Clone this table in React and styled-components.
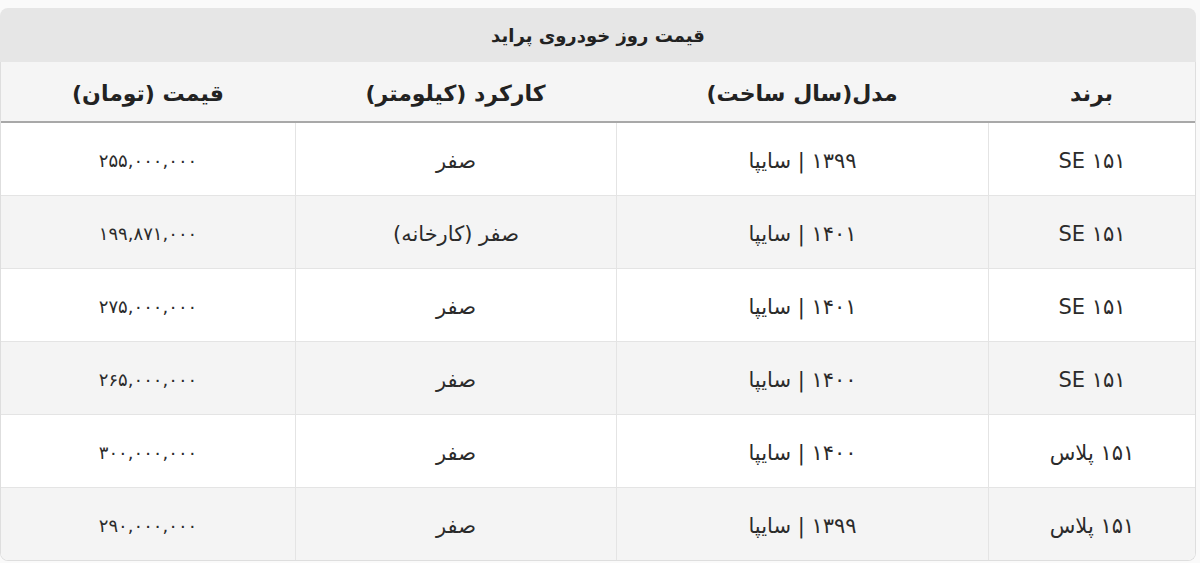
import React from 'react';
import styled, {createGlobalStyle} from 'styled-components';

const GlobalStyle = createGlobalStyle`
  body {
    margin:0;
    background-color:#fafafa;
    font-family:'DejaVu Sans', 'Noto Sans', sans-serif;
    color:#2b2b2b;
  }
`;

const Page = styled.div`
  width:1196px;
  padding-top:8px;
  direction:rtl;
`;

const TitleBar = styled.div`
  display:flex;
  align-items:center;
  justify-content:center;
  height:54px;
  background-color:#e6e6e6;
  border-radius:8px 8px 0 0;
  font-size:18px;
  font-weight:bold;
  color:#222;
`;

const Table = styled.div`
  display:grid;
  grid-template-columns:207px 372px 321px 1fr;
  border:1px solid #dedede;
  border-top:none;
  border-radius:0 0 8px 8px;
  overflow:hidden;
  background-color:#fff;
`;

const HeadCell = styled.div`
  display:flex;
  align-items:center;
  justify-content:center;
  box-sizing:border-box;
  height:61px;
  padding-top:4px;
  background-color:#f5f5f5;
  border-bottom:2px solid #a8a8a8;
  font-size:22px;
  font-weight:bold;
  color:#222;
`;

const Cell = styled.div`
  display:flex;
  align-items:center;
  justify-content:center;
  box-sizing:border-box;
  height:${p => (p.$first ? '72px' : '73px')};
  padding-top:3px;
  font-size:${p => (p.$price ? '18px' : '21px')};
  background-color:${p => (p.$odd ? '#f4f4f4' : '#ffffff')};
  border-top:${p => (p.$first ? 'none' : '1px solid #e4e4e4')};
  border-left:${p => (p.$price ? 'none' : '1px solid #e4e4e4')};
`;

const headers = ['برند', 'مدل(سال ساخت)', 'کارکرد (کیلومتر)', 'قیمت (تومان)'];

const rows = [
  ['۱۵۱ SE', '۱۳۹۹ | سایپا', 'صفر', '۲۵۵,۰۰۰,۰۰۰'],
  ['۱۵۱ SE', '۱۴۰۱ | سایپا', 'صفر  (کارخانه)', '۱۹۹,۸۷۱,۰۰۰'],
  ['۱۵۱ SE', '۱۴۰۱ | سایپا', 'صفر', '۲۷۵,۰۰۰,۰۰۰'],
  ['۱۵۱ SE', '۱۴۰۰ | سایپا', 'صفر', '۲۶۵,۰۰۰,۰۰۰'],
  ['۱۵۱ پلاس', '۱۴۰۰ | سایپا', 'صفر', '۳۰۰,۰۰۰,۰۰۰'],
  ['۱۵۱ پلاس', '۱۳۹۹ | سایپا', 'صفر', '۲۹۰,۰۰۰,۰۰۰'],
];

const App = () => (
  <Page>
    <GlobalStyle />
    <TitleBar>قیمت روز خودروی پراید</TitleBar>
    <Table>
      {headers.map(h => <HeadCell key={h}>{h}</HeadCell>)}
      {rows.map((row, i) =>
        row.map((value, j) => (
          <Cell key={`${i}-${j}`} $odd={i % 2 === 1} $first={i === 0} $price={j === row.length - 1}>
            {value}
          </Cell>
        ))
      )}
    </Table>
  </Page>
);

export default App;
